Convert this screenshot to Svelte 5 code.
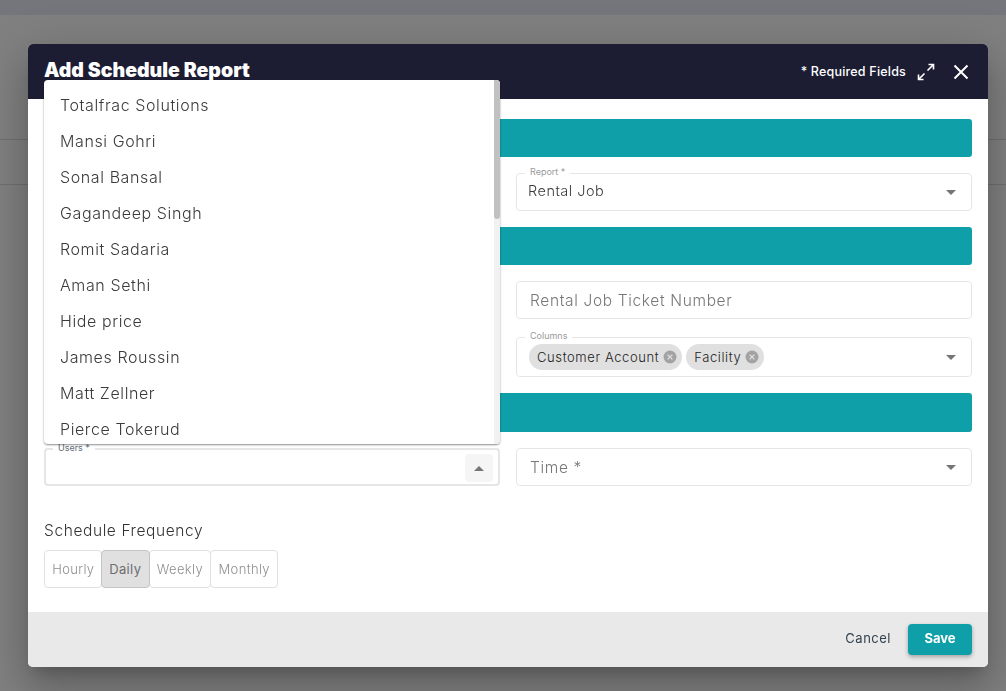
<script>
  let users = ['Totalfrac Solutions', 'Mansi Gohri', 'Sonal Bansal', 'Gagandeep Singh', 'Romit Sadaria', 'Aman Sethi', 'Hide price', 'James Roussin', 'Matt Zellner', 'Pierce Tokerud'];
  let frequencies = ['Hourly', 'Daily', 'Weekly', 'Monthly'];
  let selected = 'Daily';
  let columns = ['Customer Account', 'Facility'];
</script>

<div class="page">
  <div class="topbar"></div>
  <div class="toolbar"></div>
</div>

<div class="overlay">
  <div class="modal">
    <header>
      <h2>Add Schedule Report</h2>
      <span class="required">* Required Fields</span>
      <svg class="expand" width="18" height="18" viewBox="0 0 18 18" fill="none" stroke="#fff" stroke-width="1.6">
        <path d="M10.5 7.5 16.5 1.5M11.5 1.5h5v5M7.5 10.5l-6 6M1.5 11.5v5h5" />
      </svg>
      <svg class="close" width="16" height="16" viewBox="0 0 16 16" fill="none" stroke="#fff" stroke-width="2">
        <path d="M1.5 1.5l13 13M14.5 1.5l-13 13" />
      </svg>
    </header>

    <div class="body">
      <div class="bar"></div>
      <div class="row first">
        <div class="cell"></div>
        <div class="field">
          <span class="legend">Report *</span>
          <span class="value">Rental Job</span>
          <span class="caret"></span>
        </div>
      </div>
      <div class="bar"></div>
      <div class="row first">
        <div class="cell"></div>
        <div class="field"><span class="placeholder">Rental Job Ticket Number</span></div>
      </div>
      <div class="row chips-row">
        <div class="cell"></div>
        <div class="field tall">
          <span class="legend">Columns</span>
          {#each columns as col}
            <span class="chip">
              {col}
              <svg width="14" height="14" viewBox="0 0 14 14">
                <circle cx="7" cy="7" r="6.5" fill="#a3a3a3" />
                <path d="M4.6 4.6l4.8 4.8M9.4 4.6l-4.8 4.8" stroke="#e0e0e0" stroke-width="1.3" />
              </svg>
            </span>
          {/each}
          <span class="caret"></span>
        </div>
      </div>
      <div class="bar third"></div>
      <div class="row first">
        <div class="field open">
          <span class="legend users">Users *</span>
          <span class="toggle"><span class="caret up"></span></span>
        </div>
        <div class="field">
          <span class="placeholder">Time *</span>
          <span class="caret"></span>
        </div>
      </div>

      <p class="freq-label">Schedule Frequency</p>
      <div class="freq">
        {#each frequencies as f}
          <button class:active={f === selected}>{f}</button>
        {/each}
      </div>
    </div>

    <footer>
      <button class="cancel">Cancel</button>
      <button class="save">Save</button>
    </footer>

    <div class="popup">
      <ul>
        {#each users as u}
          <li>{u}</li>
        {/each}
      </ul>
      <div class="track"><div class="thumb"></div></div>
    </div>
  </div>
</div>

<style>
  :global(body) {
    margin: 0;
    overflow: hidden;
    font-family: Inter, 'Liberation Sans', sans-serif;
  }

  .page {
    height: 691px;
    background: #808080;
  }

  .topbar {
    height: 15px;
    background: #75767c;
  }

  .toolbar {
    margin-top: 124px;
    height: 44px;
    border-top: 1px solid #6f6f6f;
    border-bottom: 1px solid #6f6f6f;
  }

  .overlay {
    position: fixed;
    inset: 0;
    padding: 44px 18px 24px 28px;
    box-sizing: border-box;
  }

  .modal {
    position: relative;
    height: 100%;
    display: flex;
    flex-direction: column;
    background: #fff;
    border-radius: 5px;
    box-shadow: 0 11px 15px -7px rgba(0, 0, 0, 0.2), 0 24px 38px 3px rgba(0, 0, 0, 0.14), 0 9px 46px 8px rgba(0, 0, 0, 0.12);
  }

  header {
    flex: 0 0 55px;
    display: flex;
    align-items: center;
    padding: 0 19px 0 16px;
    background: #1c1d33;
    border-radius: 5px 5px 0 0;
    color: #fff;
  }

  h2 {
    margin: 0 auto 3px 0;
    font-size: 19.5px;
    font-weight: 900;
    letter-spacing: 0;
  }

  .required {
    font-size: 12.5px;
    font-weight: 500;
    letter-spacing: 0.2px;
  }

  .expand {
    margin-left: 11px;
  }

  .close {
    margin-left: 18px;
  }

  .body {
    flex: 1;
    padding: 20px 16px 0;
  }

  .bar {
    height: 38px;
    background: #0f9fa9;
    border-radius: 3px;
  }

  .bar.third {
    height: 39px;
    margin-top: 16px;
  }

  .row {
    display: grid;
    grid-template-columns: 456px 456px;
    column-gap: 16px;
  }

  .row.first {
    margin: 16px 0;
  }

  .row.chips-row {
    margin-top: 18px;
  }

  .field {
    position: relative;
    height: 38px;
    box-sizing: border-box;
    display: flex;
    align-items: center;
    gap: 4px;
    padding: 0 11px;
    border: 1px solid #e6e6e6;
    border-radius: 4px;
    font-size: 14px;
    color: #3c3c3c;
  }

  .field.tall {
    height: 40px;
    padding-left: 12px;
  }

  .field.open {
    border-width: 2px;
  }

  .legend {
    position: absolute;
    top: -8px;
    left: 8px;
    padding: 0 5px;
    background: #fff;
    font-size: 9px;
    line-height: 12px;
    color: #9a9a9a;
  }

  .legend.users {
    top: -8px;
    left: 7px;
    color: #5f6f78;
  }

  .placeholder {
    padding-left: 2px;
    font-size: 15.5px;
    font-weight: 300;
    letter-spacing: 0.65px;
    color: #777;
  }

  .value {
    margin-bottom: 4px;
    font-size: 14.5px;
    font-weight: 300;
    letter-spacing: 0.5px;
  }

  .caret {
    position: absolute;
    right: 15px;
    top: 50%;
    margin-top: -2px;
    border-left: 5px solid transparent;
    border-right: 5px solid transparent;
    border-top: 5px solid #757575;
  }

  .caret.up {
    position: static;
    margin: 0;
    border-top: none;
    border-bottom: 5px solid #757575;
  }

  .toggle {
    position: absolute;
    right: 5px;
    top: 4px;
    width: 28px;
    height: 28px;
    display: flex;
    align-items: center;
    justify-content: center;
    background: #f5f5f5;
    border-radius: 4px;
  }

  .chip {
    display: inline-flex;
    align-items: center;
    gap: 4px;
    height: 26px;
    padding: 0 5px 0 8px;
    margin-top: -1px;
    background: #e0e0e0;
    border-radius: 13px;
    font-size: 13px;
    font-weight: 300;
    letter-spacing: 0.6px;
    color: #222;
  }

  .freq-label {
    margin: 34px 0 9px;
    font-size: 15.5px;
    line-height: 21px;
    font-weight: 300;
    letter-spacing: 0.6px;
    color: #333;
  }

  .freq {
    display: flex;
  }

  .freq button {
    height: 38px;
    padding: 0 7.25px;
    margin-right: -1px;
    background: #fff;
    border: 1px solid #e0e0e0;
    border-radius: 4px;
    font: 300 13px Inter, sans-serif;
    letter-spacing: 0.35px;
    color: #8f8f8f;
  }

  .freq button:first-child {
    padding-right: 6.5px;
  }

  .freq button.active {
    position: relative;
    background: #e0e0e0;
    border-color: #c4c4c4;
    color: #6e6e6e;
    font-weight: 400;
  }

  footer {
    flex: 0 0 55px;
    display: flex;
    align-items: center;
    justify-content: flex-end;
    gap: 17px;
    padding: 0 16px;
    background: #e9e9e9;
    border-radius: 0 0 5px 5px;
  }

  footer button {
    border: none;
    background: none;
    padding: 0 0 3px;
    font-family: Inter, sans-serif;
    font-size: 13px;
  }

  .cancel {
    color: #33424f;
    letter-spacing: 0.5px;
  }

  .save {
    width: 64px;
    height: 31px;
    background: #0f9fa9;
    border-radius: 4px;
    color: #fff;
    font-weight: 700;
    box-shadow: 0 2px 4px rgba(0, 0, 0, 0.3);
  }

  .popup {
    position: absolute;
    left: 16px;
    top: 36px;
    width: 456px;
    height: 364px;
    overflow: hidden;
    background: #fff;
    border-radius: 4px;
    box-shadow: 0 1px 2px rgba(0, 0, 0, 0.45);
  }

  ul {
    margin: 0;
    padding: 7px 0 0;
    list-style: none;
  }

  li {
    height: 36px;
    line-height: 36px;
    padding-left: 16px;
    font-size: 16px;
    font-weight: 300;
    letter-spacing: 0.6px;
    color: #3a3a3a;
  }

  .track {
    position: absolute;
    top: 0;
    right: 0;
    bottom: 0;
    width: 6px;
    background: #f1f1f1;
  }

  .thumb {
    height: 139px;
    background: #c1c1c1;
    border-radius: 0 4px 3px 3px;
  }
</style>
